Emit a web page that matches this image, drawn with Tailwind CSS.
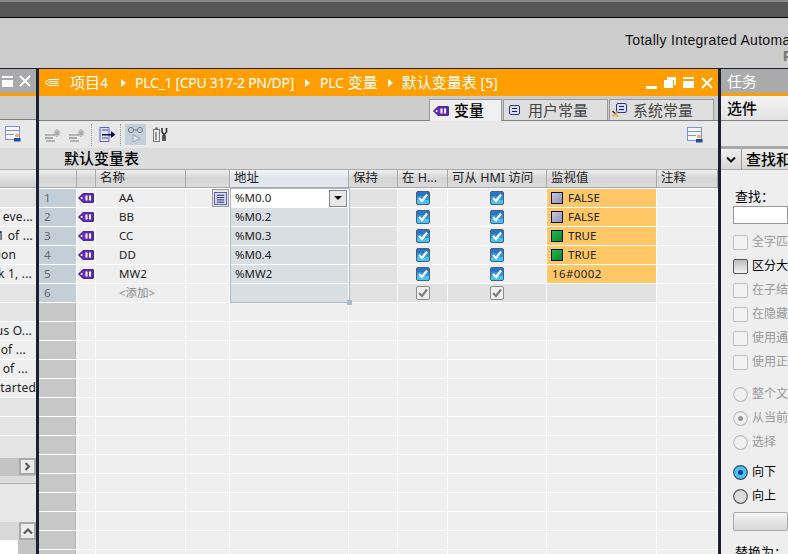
<!DOCTYPE html>
<html lang="zh">
<head>
<meta charset="utf-8">
<script src="https://cdn.jsdelivr.net/npm/@tailwindcss/browser@4"></script>
</head>
<body class="w-[788px] h-[554px] overflow-hidden bg-[#cccccc] text-black font-['Noto_Sans','Noto_Sans_CJK_SC',sans-serif] text-[12px] leading-none">
<svg class="hidden">
  <symbol id="tag" viewBox="0 0 16 10"><path d="M0.5 5L5 0.7H15.3V9.3H5Z" fill="#6a2cc0" stroke="#2b0f6b"/><circle cx="3.6" cy="5" r="1" fill="#fff"/><rect x="7.5" y="2.5" width="2" height="5" fill="#fff"/><rect x="11" y="2.5" width="2" height="5" fill="#fff"/></symbol>
  <symbol id="chk" viewBox="0 0 14 14"><rect x="0.5" y="0.5" width="13" height="13" rx="1.5" fill="#45c4f5" stroke="#4a5f78"/><rect x="1" y="1" width="12" height="4" fill="#2b74c8"/><rect x="1" y="5" width="12" height="4" fill="#2f95dc"/><path d="M3 7L6 10L11 3.5" fill="none" stroke="#fff" stroke-width="2.2"/></symbol>
  <symbol id="chg" viewBox="0 0 14 14"><rect x="0.5" y="0.5" width="13" height="13" rx="1.5" fill="#efefef" stroke="#8a8a8a"/><path d="M3 7L6 10L11 3.5" fill="none" stroke="#808080" stroke-width="2.2"/></symbol>
  <symbol id="cbx" viewBox="0 0 15 15"><rect x="0.5" y="0.5" width="14" height="14" rx="1.5" fill="#f2f2f2" stroke="#c0c0c0"/></symbol>
  <symbol id="rdo" viewBox="0 0 15 15"><circle cx="7.5" cy="7.5" r="6.8" fill="#f0f0f0" stroke="#bdbdbd" stroke-width="1.2"/></symbol>
  <symbol id="adm" viewBox="0 0 16 16"><rect x="0.5" y="0.5" width="14" height="13" fill="#f4f6fb" stroke="#8292d8"/><rect x="1" y="4" width="13" height="1" fill="#8292d8"/><rect x="1" y="8" width="8" height="1" fill="#8292d8"/><circle cx="12" cy="9.5" r="2" fill="#e8b070"/><rect x="9" y="12" width="6.5" height="3.5" fill="#1f4f9c"/></symbol>
  <symbol id="gear" viewBox="0 0 17 14"><rect x="0" y="6" width="10" height="2" fill="#b4b4b4"/><rect x="0" y="9" width="8" height="2" fill="#a8a8a8"/><rect x="1" y="12" width="9" height="2" fill="#b4b4b4"/><path d="M12 1V9M8.5 5H15.5M9.5 2.5L14.5 7.5M14.5 2.5L9.5 7.5" stroke="#aaa" stroke-width="1.2"/></symbol>
  <symbol id="lst" viewBox="0 0 14 14"><rect x="0.5" y="0.5" width="13" height="13" fill="#d7dcf4" stroke="#4d59b5"/><path d="M3 3.5H11M3 6H11M3 8.5H11M3 11H11" stroke="#1a1a5e"/></symbol>
</svg>

<div class="h-[18px] bg-[#585858] border-t-2 border-t-[#888] border-b border-b-black"></div>
<div class="h-[50px] bg-[#cccccc] pl-[625px] pt-[15px] whitespace-nowrap overflow-hidden">
  <div class="text-[14px] h-[15px] font-['Liberation_Sans'] tracking-[0.3px] text-[#111]">Totally Integrated Automation</div>
  <div class="pl-[158px] text-[15px] font-bold text-[#777] font-['Liberation_Sans']">PORTAL</div>
</div>

<div class="flex h-[486px] border-t border-t-[#1b2033]">
  <!-- left panel -->
  <div class="w-[36px] flex flex-col shrink-0 overflow-hidden bg-[#e8e8e8]">
    <div class="h-[27px] bg-[#aaaaaa] border-b-[3px] border-b-[#ff9e00] flex items-center gap-[6px] pl-[2px] shrink-0">
      <div class="w-[11px] h-[11px] bg-white"><div class="h-[2px] translate-y-[2px] bg-[#aaaaaa]"></div></div>
      <svg width="12" height="12" viewBox="0 0 12 12" class="shrink-0"><path d="M1 1L11 11M11 1L1 11" stroke="#fff" stroke-width="2"/></svg>
    </div>
    <div class="h-[24px] bg-[#cccccc] border-b border-b-[#808080] shrink-0"></div>
    <div class="h-[28px] bg-[#e8e8e8] pl-[5px] pt-[6px] shrink-0"><svg width="16" height="16"><use href="#adm"/></svg></div>
    <div class="h-[21px] bg-[#dcdcdc] shrink-0"></div>
    <div class="h-[19px] bg-gradient-to-b from-[#efefef] to-[#cfcfcf] border-y border-y-[#aaaaaa] shrink-0"></div>
    <div class="flex flex-col gap-px bg-white pt-px text-[12px] tracking-[0.2px] text-[#222] whitespace-nowrap text-right shrink-0">
      <div class="h-[18px] bg-[#e4e4e4]"></div>
      <div class="h-[18px] bg-[#efefef] flex items-center justify-end pr-[3px]">eve...</div>
      <div class="h-[18px] bg-[#efefef] flex items-center justify-end pr-[3px]">1 of ...</div>
      <div class="h-[18px] bg-[#efefef] flex items-center pr-[20px] justify-end">ion</div>
      <div class="h-[18px] bg-[#efefef] flex items-center justify-end pr-[4px]">k 1, ...</div>
      <div class="h-[18px] bg-[#e4e4e4]"></div>
      <div class="h-[18px] bg-[#e4e4e4]"></div>
      <div class="h-[18px] bg-[#efefef] flex items-center justify-end pr-[4px]">us O...</div>
      <div class="h-[18px] bg-[#efefef] flex items-center justify-end pr-[10px]">of ...</div>
      <div class="h-[18px] bg-[#efefef] flex items-center justify-end pr-[8px]">e of ...</div>
      <div class="h-[18px] bg-[#efefef] flex items-center justify-end">started</div>
      <div class="h-[18px] bg-[#e4e4e4]"></div>
      <div class="h-[18px] bg-[#e4e4e4]"></div>
      <div class="h-[22px] bg-[#e4e4e4]"></div>
    </div>
    <div class="h-[18px] bg-[#c4c4c4] flex justify-end shrink-0">
      <div class="w-[17px] h-[17px] bg-[#ececec] border-2 border-[#a8a8a8] flex items-center justify-center"><svg width="7" height="9" viewBox="0 0 7 9"><path d="M1.5 1L5 4.5L1.5 8" fill="none" stroke="#555" stroke-width="2"/></svg></div>
    </div>
    <div class="h-[8px] bg-[#dcdcdc] border-b border-b-[#b0b0b0] shrink-0"></div>
    <div class="h-[38px] bg-[#e8e8e8] shrink-0"></div>
    <div class="h-[18px] bg-[#d8d8d8] flex justify-end shrink-0">
      <div class="w-[17px] h-[18px] bg-[#ececec] border-2 border-[#a8a8a8] flex items-center justify-center"><svg width="10" height="7" viewBox="0 0 10 7"><path d="M1 5.5L5 1.5L9 5.5" fill="none" stroke="#555" stroke-width="2"/></svg></div>
    </div>
    <div class="flex flex-1">
      <div class="w-[18px] bg-white"></div>
      <div class="flex-1 bg-[#c4c4c4]"></div>
    </div>
  </div>

  <div class="w-[3px] bg-[#1b2033] shrink-0"></div>

  <!-- center -->
  <div class="w-[679px] shrink-0 flex flex-col overflow-hidden bg-[#efefef]">
    <div class="h-[27px] bg-[#ff9e00] text-white flex items-center shrink-0 relative text-[15px] whitespace-nowrap">
      <svg width="16" height="9" viewBox="0 0 16 9" class="ml-[5px]"><path d="M15 1.5H5L1 4.5L5 7.5H15M14.5 3.5H6L4.5 4.5L6 5.5H14.5" fill="none" stroke="#fff"/></svg>
      <span class="ml-[10px]">项目<span class="text-[14px]">4</span></span>
      <span class="ml-[13px] w-0 h-0 border-y-[4px] border-y-transparent border-l-[5px] border-l-white"></span>
      <span class="ml-[9px] text-[14px] tracking-[-0.3px]">PLC_1 [CPU 317-2 PN/DP]</span>
      <span class="ml-[11px] w-0 h-0 border-y-[4px] border-y-transparent border-l-[5px] border-l-white"></span>
      <span class="ml-[10px]"><span class="text-[14px] tracking-[-0.2px]">PLC</span> 变量</span>
      <span class="ml-[10px] w-0 h-0 border-y-[4px] border-y-transparent border-l-[5px] border-l-white"></span>
      <span class="ml-[9px]">默认变量表 <span class="text-[14px]">[5]</span></span>
      <div class="ml-auto flex items-center gap-[7px] pr-[5px]">
        <div class="w-[11px] h-[3px] bg-white mt-[9px]"></div>
        <svg width="12" height="11" viewBox="0 0 12 11"><path d="M3 0H12V8H10V3H3Z" fill="#fff"/><rect x="0" y="3" width="9" height="8" fill="#fff"/></svg>
        <div class="w-[11px] h-[11px] bg-white"><div class="h-[2px] translate-y-[2px] bg-[#ff9e00]"></div></div>
        <svg width="12" height="12" viewBox="0 0 12 12"><path d="M1 1L11 11M11 1L1 11" stroke="#fff" stroke-width="2"/></svg>
      </div>
    </div>
    <div class="h-[25px] bg-[#cccccc] border-b border-b-[#808080] shrink-0 flex justify-end items-end pr-[5px] gap-[1px] text-[15px] whitespace-nowrap">
      <div class="w-[73px] h-[22px] -mb-px bg-[#f0f0f0] border border-[#999] border-b-0 flex items-center pl-[3px] gap-[5px] font-medium"><svg width="16" height="10" class="shrink-0"><use href="#tag"/></svg>变量</div>
      <div class="w-[105px] h-[21px] bg-[#dedede] border border-[#999] border-b-0 flex items-center pl-[5px] gap-[8px] text-[#444]"><svg width="11" height="10" viewBox="0 0 11 10" class="shrink-0"><rect x="0.5" y="0.5" width="10" height="9" rx="1.5" fill="#d7dcf4" stroke="#2d3a86"/><path d="M3 3.5H8M3 6.5H8" stroke="#1a1a5e"/></svg>用户常量</div>
      <div class="w-[105px] h-[21px] bg-[#dedede] border border-[#999] border-b-0 flex items-center pl-[2px] gap-[6px] text-[#444] mr-[-1px]"><svg width="15" height="14" viewBox="0 0 15 14" class="shrink-0"><rect x="4.5" y="0.5" width="10" height="9" rx="1.5" fill="#d7dcf4" stroke="#2d3a86"/><path d="M7 3.5H12M7 6.5H12" stroke="#1a1a5e"/><path d="M0.5 13.5L6 8M0.5 8L6 13.5" stroke="#e0a020" stroke-width="1.4"/><path d="M0.5 8L3 10.5" stroke="#2d3a86" stroke-width="1.4"/></svg>系统常量</div>
    </div>
    <div class="h-[27px] bg-[#e8e8e8] shrink-0 flex items-center pl-[6px] pr-[15px]">
      <svg width="17" height="14"><use href="#gear"/></svg>
      <svg width="17" height="14" class="ml-[7px]"><use href="#gear"/></svg>
      <div class="w-0 h-[22px] border-l border-dotted border-l-[#999] ml-[5px]"></div>
      <svg width="17" height="15" viewBox="0 0 17 15" class="ml-[7px]"><path d="M1 0.5H10V14.5H1Z" fill="#dfe4fa" stroke="#5563c8"/><path d="M3 3H9M3 11H9" stroke="#40488a"/><path d="M3 7H12V4L16.5 7.5L12 11V8.5H3Z" fill="#0c0f4d"/></svg>
      <div class="w-0 h-[22px] border-l border-dotted border-l-[#999] ml-[4px]"></div>
      <div class="w-[21px] h-[21px] bg-[#c3cfdb] ml-[4px] flex items-center justify-center"><svg width="17" height="17" viewBox="0 0 17 17"><circle cx="4" cy="4" r="2.6" fill="none" stroke="#777"/><circle cx="13" cy="4" r="2.6" fill="none" stroke="#777"/><path d="M6.5 4H10.5" stroke="#777"/><path d="M6 9V16L13 12.5Z" fill="#dde3e9" stroke="#9aa7b3"/></svg></div>
      <svg width="15" height="15" viewBox="0 0 15 15" class="ml-[7px]"><rect x="0.5" y="2.5" width="6" height="12" fill="#eee" stroke="#777"/><rect x="2" y="0.5" width="3" height="2" fill="#777"/><rect x="2" y="5" width="2" height="8" fill="#999"/><path d="M9 1V5L12 9V14M13.5 1V5L10 9V14" fill="none" stroke="#333" stroke-width="1.6"/></svg>
      <svg width="16" height="16" class="ml-auto"><use href="#adm"/></svg>
    </div>
    <div class="h-[21px] bg-[#dcdcdc] shrink-0 pl-[25px] flex items-center text-[15px] font-medium">默认变量表</div>
    <!-- table header -->
    <div class="h-[19px] shrink-0 grid grid-cols-[37px_18px_89px_43px_118px_48px_49px_98px_109px_60px] bg-[#aaaaaa] gap-x-px border-y border-y-[#aaaaaa] text-[12.5px] whitespace-nowrap text-[#222]">
      <div class="bg-gradient-to-b from-[#f0f0f0] via-[#d4d4d4] to-[#dcdcdc]"></div>
      <div class="bg-gradient-to-b from-[#f0f0f0] via-[#d4d4d4] to-[#dcdcdc]"></div>
      <div class="bg-gradient-to-b from-[#f0f0f0] via-[#d4d4d4] to-[#dcdcdc] flex items-center pl-[4px]">名称</div>
      <div class="bg-gradient-to-b from-[#f0f0f0] via-[#d4d4d4] to-[#dcdcdc]"></div>
      <div class="bg-gradient-to-b from-[#f2f5f8] via-[#dde4ea] to-[#e4e9ee] flex items-center pl-[4px]">地址</div>
      <div class="bg-gradient-to-b from-[#f0f0f0] via-[#d4d4d4] to-[#dcdcdc] flex items-center pl-[4px]">保持</div>
      <div class="bg-gradient-to-b from-[#f0f0f0] via-[#d4d4d4] to-[#dcdcdc] flex items-center pl-[4px]">在 H...</div>
      <div class="bg-gradient-to-b from-[#f0f0f0] via-[#d4d4d4] to-[#dcdcdc] flex items-center pl-[4px]">可从 HMI 访问</div>
      <div class="bg-gradient-to-b from-[#f0f0f0] via-[#d4d4d4] to-[#dcdcdc] flex items-center pl-[4px]">监视值</div>
      <div class="bg-gradient-to-b from-[#f0f0f0] via-[#d4d4d4] to-[#dcdcdc] flex items-center pl-[4px]">注释</div>
    </div>
    <!-- table body -->
    <div class="relative flex-1 min-h-0 overflow-hidden bg-white pt-px grid grid-cols-[37px_18px_89px_43px_118px_48px_49px_98px_109px_60px] auto-rows-[18px] gap-px content-start text-[11.5px] text-[#222] whitespace-nowrap">
      <!-- row 1 -->
      <div class="bg-[#c4ced7] text-[#666] flex items-center pl-[5px]">1</div>
      <div class="bg-[#efefef] flex items-center justify-center"><svg width="16" height="10"><use href="#tag"/></svg></div>
      <div class="bg-[#efefef] flex items-center pl-[23px]">AA</div>
      <div class="bg-[#efefef] flex items-center justify-end"><div class="w-[17px] h-[18px] bg-[#e8e8e8] border border-[#999] flex items-center justify-center"><svg width="13" height="13"><use href="#lst"/></svg></div></div>
      <div class="bg-white flex items-center justify-between pl-[5px] pr-px">%M0.0<div class="w-[18px] h-[17px] bg-[#e8e8e8] border border-[#888] flex items-center justify-center"><span class="w-0 h-0 border-x-[4px] border-x-transparent border-t-[4px] border-t-black"></span></div></div>
      <div class="bg-[#e2e2e2]"></div>
      <div class="bg-[#efefef] flex items-center justify-center"><svg width="14" height="14"><use href="#chk"/></svg></div>
      <div class="bg-[#efefef] flex items-center justify-center"><svg width="14" height="14"><use href="#chk"/></svg></div>
      <div class="bg-[#ffc766] flex items-center pl-[4px] gap-[5px]"><div class="w-[12px] h-[12px] border border-[#0a0f50] bg-gradient-to-br from-[#c8cbdc] to-[#8f93b0]"></div>FALSE</div>
      <div class="bg-[#efefef]"></div>
      <!-- row 2 -->
      <div class="bg-[#c4ced7] text-[#666] flex items-center pl-[5px]">2</div>
      <div class="bg-[#efefef] flex items-center justify-center"><svg width="16" height="10"><use href="#tag"/></svg></div>
      <div class="bg-[#efefef] flex items-center pl-[23px]">BB</div>
      <div class="bg-[#efefef]"></div>
      <div class="bg-[#d9dee2] flex items-center pl-[5px]">%M0.2</div>
      <div class="bg-[#e2e2e2]"></div>
      <div class="bg-[#efefef] flex items-center justify-center"><svg width="14" height="14"><use href="#chk"/></svg></div>
      <div class="bg-[#efefef] flex items-center justify-center"><svg width="14" height="14"><use href="#chk"/></svg></div>
      <div class="bg-[#ffc766] flex items-center pl-[4px] gap-[5px]"><div class="w-[12px] h-[12px] border border-[#0a0f50] bg-gradient-to-br from-[#c8cbdc] to-[#8f93b0]"></div>FALSE</div>
      <div class="bg-[#efefef]"></div>
      <!-- row 3 -->
      <div class="bg-[#c4ced7] text-[#666] flex items-center pl-[5px]">3</div>
      <div class="bg-[#efefef] flex items-center justify-center"><svg width="16" height="10"><use href="#tag"/></svg></div>
      <div class="bg-[#efefef] flex items-center pl-[23px]">CC</div>
      <div class="bg-[#efefef]"></div>
      <div class="bg-[#d9dee2] flex items-center pl-[5px]">%M0.3</div>
      <div class="bg-[#e2e2e2]"></div>
      <div class="bg-[#efefef] flex items-center justify-center"><svg width="14" height="14"><use href="#chk"/></svg></div>
      <div class="bg-[#efefef] flex items-center justify-center"><svg width="14" height="14"><use href="#chk"/></svg></div>
      <div class="bg-[#ffc766] flex items-center pl-[4px] gap-[5px]"><div class="w-[12px] h-[12px] border border-[#0a0f50] bg-gradient-to-br from-[#22b84a] to-[#0a8a24]"></div>TRUE</div>
      <div class="bg-[#efefef]"></div>
      <!-- row 4 -->
      <div class="bg-[#c4ced7] text-[#666] flex items-center pl-[5px]">4</div>
      <div class="bg-[#efefef] flex items-center justify-center"><svg width="16" height="10"><use href="#tag"/></svg></div>
      <div class="bg-[#efefef] flex items-center pl-[23px]">DD</div>
      <div class="bg-[#efefef]"></div>
      <div class="bg-[#d9dee2] flex items-center pl-[5px]">%M0.4</div>
      <div class="bg-[#e2e2e2]"></div>
      <div class="bg-[#efefef] flex items-center justify-center"><svg width="14" height="14"><use href="#chk"/></svg></div>
      <div class="bg-[#efefef] flex items-center justify-center"><svg width="14" height="14"><use href="#chk"/></svg></div>
      <div class="bg-[#ffc766] flex items-center pl-[4px] gap-[5px]"><div class="w-[12px] h-[12px] border border-[#0a0f50] bg-gradient-to-br from-[#22b84a] to-[#0a8a24]"></div>TRUE</div>
      <div class="bg-[#efefef]"></div>
      <!-- row 5 -->
      <div class="bg-[#c4ced7] text-[#666] flex items-center pl-[5px]">5</div>
      <div class="bg-[#efefef] flex items-center justify-center"><svg width="16" height="10"><use href="#tag"/></svg></div>
      <div class="bg-[#efefef] flex items-center pl-[23px]">MW2</div>
      <div class="bg-[#efefef]"></div>
      <div class="bg-[#d9dee2] flex items-center pl-[5px]">%MW2</div>
      <div class="bg-[#e2e2e2]"></div>
      <div class="bg-[#efefef] flex items-center justify-center"><svg width="14" height="14"><use href="#chk"/></svg></div>
      <div class="bg-[#efefef] flex items-center justify-center"><svg width="14" height="14"><use href="#chk"/></svg></div>
      <div class="bg-[#ffc766] flex items-center pl-[5px] tracking-[0.4px]">16#0002</div>
      <div class="bg-[#efefef]"></div>
      <!-- row 6 -->
      <div class="bg-[#c4ced7] text-[#666] flex items-center pl-[5px]">6</div>
      <div class="bg-[#efefef]"></div>
      <div class="bg-[#efefef] flex items-center pl-[23px] text-[#888]">&lt;添加&gt;</div>
      <div class="bg-[#efefef]"></div>
      <div class="bg-[#d9dee2]"></div>
      <div class="bg-[#e2e2e2]"></div>
      <div class="bg-[#e2e2e2] flex items-center justify-center"><svg width="14" height="14"><use href="#chg"/></svg></div>
      <div class="bg-[#e2e2e2] flex items-center justify-center"><svg width="14" height="14"><use href="#chg"/></svg></div>
      <div class="bg-[#e2e2e2]"></div>
      <div class="bg-[#efefef]"></div>
      <!-- empty rows -->
      <div class="bg-[#c8c8c8] border-r border-r-[#b0b0b0]"></div><div class="bg-[#efefef]"></div><div class="bg-[#efefef]"></div><div class="bg-[#efefef]"></div><div class="bg-[#efefef]"></div><div class="bg-[#efefef]"></div><div class="bg-[#efefef]"></div><div class="bg-[#efefef]"></div><div class="bg-[#efefef]"></div><div class="bg-[#efefef]"></div>
      <div class="bg-[#c8c8c8] border-r border-r-[#b0b0b0]"></div><div class="bg-[#efefef]"></div><div class="bg-[#efefef]"></div><div class="bg-[#efefef]"></div><div class="bg-[#efefef]"></div><div class="bg-[#efefef]"></div><div class="bg-[#efefef]"></div><div class="bg-[#efefef]"></div><div class="bg-[#efefef]"></div><div class="bg-[#efefef]"></div>
      <div class="bg-[#c8c8c8] border-r border-r-[#b0b0b0]"></div><div class="bg-[#efefef]"></div><div class="bg-[#efefef]"></div><div class="bg-[#efefef]"></div><div class="bg-[#efefef]"></div><div class="bg-[#efefef]"></div><div class="bg-[#efefef]"></div><div class="bg-[#efefef]"></div><div class="bg-[#efefef]"></div><div class="bg-[#efefef]"></div>
      <div class="bg-[#c8c8c8] border-r border-r-[#b0b0b0]"></div><div class="bg-[#efefef]"></div><div class="bg-[#efefef]"></div><div class="bg-[#efefef]"></div><div class="bg-[#efefef]"></div><div class="bg-[#efefef]"></div><div class="bg-[#efefef]"></div><div class="bg-[#efefef]"></div><div class="bg-[#efefef]"></div><div class="bg-[#efefef]"></div>
      <div class="bg-[#c8c8c8] border-r border-r-[#b0b0b0]"></div><div class="bg-[#efefef]"></div><div class="bg-[#efefef]"></div><div class="bg-[#efefef]"></div><div class="bg-[#efefef]"></div><div class="bg-[#efefef]"></div><div class="bg-[#efefef]"></div><div class="bg-[#efefef]"></div><div class="bg-[#efefef]"></div><div class="bg-[#efefef]"></div>
      <div class="bg-[#c8c8c8] border-r border-r-[#b0b0b0]"></div><div class="bg-[#efefef]"></div><div class="bg-[#efefef]"></div><div class="bg-[#efefef]"></div><div class="bg-[#efefef]"></div><div class="bg-[#efefef]"></div><div class="bg-[#efefef]"></div><div class="bg-[#efefef]"></div><div class="bg-[#efefef]"></div><div class="bg-[#efefef]"></div>
      <div class="bg-[#c8c8c8] border-r border-r-[#b0b0b0]"></div><div class="bg-[#efefef]"></div><div class="bg-[#efefef]"></div><div class="bg-[#efefef]"></div><div class="bg-[#efefef]"></div><div class="bg-[#efefef]"></div><div class="bg-[#efefef]"></div><div class="bg-[#efefef]"></div><div class="bg-[#efefef]"></div><div class="bg-[#efefef]"></div>
      <div class="bg-[#c8c8c8] border-r border-r-[#b0b0b0]"></div><div class="bg-[#efefef]"></div><div class="bg-[#efefef]"></div><div class="bg-[#efefef]"></div><div class="bg-[#efefef]"></div><div class="bg-[#efefef]"></div><div class="bg-[#efefef]"></div><div class="bg-[#efefef]"></div><div class="bg-[#efefef]"></div><div class="bg-[#efefef]"></div>
      <div class="bg-[#c8c8c8] border-r border-r-[#b0b0b0]"></div><div class="bg-[#efefef]"></div><div class="bg-[#efefef]"></div><div class="bg-[#efefef]"></div><div class="bg-[#efefef]"></div><div class="bg-[#efefef]"></div><div class="bg-[#efefef]"></div><div class="bg-[#efefef]"></div><div class="bg-[#efefef]"></div><div class="bg-[#efefef]"></div>
      <div class="bg-[#c8c8c8] border-r border-r-[#b0b0b0]"></div><div class="bg-[#efefef]"></div><div class="bg-[#efefef]"></div><div class="bg-[#efefef]"></div><div class="bg-[#efefef]"></div><div class="bg-[#efefef]"></div><div class="bg-[#efefef]"></div><div class="bg-[#efefef]"></div><div class="bg-[#efefef]"></div><div class="bg-[#efefef]"></div>
      <div class="bg-[#c8c8c8] border-r border-r-[#b0b0b0]"></div><div class="bg-[#efefef]"></div><div class="bg-[#efefef]"></div><div class="bg-[#efefef]"></div><div class="bg-[#efefef]"></div><div class="bg-[#efefef]"></div><div class="bg-[#efefef]"></div><div class="bg-[#efefef]"></div><div class="bg-[#efefef]"></div><div class="bg-[#efefef]"></div>
      <div class="bg-[#c8c8c8] border-r border-r-[#b0b0b0]"></div><div class="bg-[#efefef]"></div><div class="bg-[#efefef]"></div><div class="bg-[#efefef]"></div><div class="bg-[#efefef]"></div><div class="bg-[#efefef]"></div><div class="bg-[#efefef]"></div><div class="bg-[#efefef]"></div><div class="bg-[#efefef]"></div><div class="bg-[#efefef]"></div>
      <div class="bg-[#c8c8c8] border-r border-r-[#b0b0b0]"></div><div class="bg-[#efefef]"></div><div class="bg-[#efefef]"></div><div class="bg-[#efefef]"></div><div class="bg-[#efefef]"></div><div class="bg-[#efefef]"></div><div class="bg-[#efefef]"></div><div class="bg-[#efefef]"></div><div class="bg-[#efefef]"></div><div class="bg-[#efefef]"></div>
      <div class="bg-[#c8c8c8] border-r border-r-[#b0b0b0]"></div><div class="bg-[#efefef]"></div><div class="bg-[#efefef]"></div><div class="bg-[#efefef]"></div><div class="bg-[#efefef]"></div><div class="bg-[#efefef]"></div><div class="bg-[#efefef]"></div><div class="bg-[#efefef]"></div><div class="bg-[#efefef]"></div><div class="bg-[#efefef]"></div>
      <!-- selection outline on the address column -->
      <div class="absolute left-[191px] top-0 w-[120px] h-[115px] border border-[#a9bccc] pointer-events-none"><div class="absolute -right-[3px] -bottom-[3px] w-[5px] h-[5px] bg-[#a9bccc]"></div></div>
    </div>
  </div>

  <div class="w-[3px] bg-[#1b2033] shrink-0"></div>

  <!-- right panel -->
  <div class="flex-1 min-w-0 flex flex-col overflow-hidden bg-[#eeeeee] whitespace-nowrap">
    <div class="h-[27px] bg-[#aaaaaa] border-b-[3px] border-b-[#ff9e00] text-white text-[15px] flex items-center pl-[6px] shrink-0">任务</div>
    <div class="h-[25px] bg-gradient-to-b from-[#f4f4f4] to-[#e2e2e2] border-b border-b-[#808080] text-[15px] font-medium flex items-center pl-[6px] shrink-0">选件</div>
    <div class="h-[28px] bg-[#e8e8e8] border-b-[3px] border-b-[#a8a8a8] shrink-0"></div>
    <div class="h-[21px] bg-gradient-to-b from-[#efefef] to-[#d6d6d6] border-b border-b-[#aaa] flex items-center text-[15px] font-medium shrink-0">
      <div class="w-[21px] h-full flex items-center justify-center border-r border-r-[#999] shrink-0"><svg width="10" height="7" viewBox="0 0 10 7"><path d="M1 1.5L5 5.5L9 1.5" fill="none" stroke="#111" stroke-width="2"/></svg></div>
      <span class="ml-[4px]">查找和替换</span>
    </div>
    <div class="pl-[12px] text-[12px] flex flex-col">
      <div class="mt-[19px] h-[14px] flex items-center pl-[2px] text-[13px]">查找：</div>
      <div class="mt-[3px] h-[18px] bg-white border border-[#999]"></div>
      <div class="mt-[6px] h-[24px] flex items-center gap-[4px] text-[#999]"><svg width="15" height="15" class="shrink-0"><use href="#cbx"/></svg>全字匹配</div>
      <div class="h-[24px] flex items-center gap-[4px]"><div class="w-[15px] h-[15px] shrink-0 rounded-[2px] border border-[#555] bg-gradient-to-b from-[#bdbdbd] to-[#f4f4f4]"></div>区分大小写</div>
      <div class="h-[24px] flex items-center gap-[4px] text-[#999]"><svg width="15" height="15" class="shrink-0"><use href="#cbx"/></svg>在子结构中查找</div>
      <div class="h-[24px] flex items-center gap-[4px] text-[#999]"><svg width="15" height="15" class="shrink-0"><use href="#cbx"/></svg>在隐藏文本中查找</div>
      <div class="h-[24px] flex items-center gap-[4px] text-[#999]"><svg width="15" height="15" class="shrink-0"><use href="#cbx"/></svg>使用通配符</div>
      <div class="h-[24px] flex items-center gap-[4px] text-[#999]"><svg width="15" height="15" class="shrink-0"><use href="#cbx"/></svg>使用正则表达式</div>
      <div class="mt-[8px] h-[24px] flex items-center gap-[4px] text-[#999]"><svg width="15" height="15" class="shrink-0"><use href="#rdo"/></svg>整个文档</div>
      <div class="h-[24px] flex items-center gap-[4px] text-[#999]"><svg width="15" height="15" viewBox="0 0 15 15" class="shrink-0"><circle cx="7.5" cy="7.5" r="6.8" fill="#f0f0f0" stroke="#bdbdbd" stroke-width="1.2"/><circle cx="7.5" cy="7.5" r="2.5" fill="#999"/></svg>从当前位置开始</div>
      <div class="h-[24px] flex items-center gap-[4px] text-[#999]"><svg width="15" height="15" class="shrink-0"><use href="#rdo"/></svg>选择</div>
      <div class="mt-[6px] h-[24px] flex items-center gap-[4px]"><svg width="15" height="15" viewBox="0 0 15 15" class="shrink-0"><circle cx="7.5" cy="7.5" r="6.8" fill="#4cc4f4" stroke="#3a4a5e" stroke-width="1.2"/><circle cx="7.5" cy="7.5" r="2.5" fill="#0f3f98"/></svg>向下</div>
      <div class="h-[24px] flex items-center gap-[4px]"><svg width="15" height="15" viewBox="0 0 15 15" class="shrink-0"><circle cx="7.5" cy="7.5" r="6.8" fill="#dcdcdc" stroke="#555" stroke-width="1.2"/></svg>向上</div>
      <div class="mt-[4px] h-[19px] bg-gradient-to-b from-[#f4f4f4] to-[#d8d8d8] border border-[#aaa] rounded-[2px]"></div>
      <div class="mt-[14px] h-[14px] flex items-center pl-[2px] text-[13px]">替换为：</div>
    </div>
  </div>
</div>
</body>
</html>
